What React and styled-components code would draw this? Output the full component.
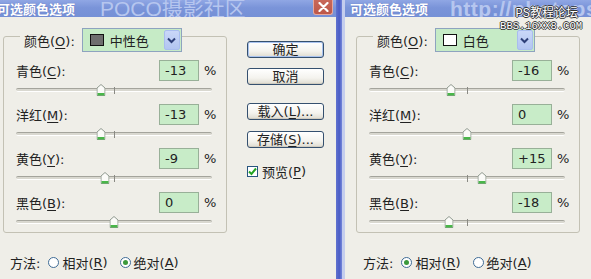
import React from "react";
import styled, { createGlobalStyle } from "styled-components";

const GlobalStyle = createGlobalStyle`
  html, body {
    margin: 0;
    padding: 0;
    background: #efeee8;
  }
  body {
    font-family: "DejaVu Sans", "Noto Sans CJK SC", sans-serif;
    font-size: 13px;
    color: #222;
  }
`;

const Screen = styled.div`
  position: relative;
  display: flex;
  width: 591px;
  height: 279px;
  overflow: hidden;
  background: #efeee8;
`;

const Win = styled.div`
  flex-shrink: 0;
  width: 344px;
  height: 279px;
  margin-left: ${(p) => (p.$first ? "-8px" : "0")};
  border-left: ${(p) => (p.$first ? "none" : "3px solid #c4cdee")};
  display: flex;
  flex-direction: column;
  background: #efeee8;
`;

const Frame = styled.div`
  flex-shrink: 0;
  width: 6px;
  height: 279px;
  background: linear-gradient(90deg, #6072cf 0%, #4b5dc6 55%, #7486d8 100%);
`;

const TitleBar = styled.div`
  display: flex;
  align-items: center;
  height: 17px;
  padding-left: 5px;
  white-space: nowrap;
  overflow: hidden;
  background: linear-gradient(180deg, #90a7e4 0%, #7a94d9 45%, #7590d6 100%);
`;

const Title = styled.span`
  font-family: "Noto Sans CJK SC", sans-serif;
  font-weight: 700;
  font-size: 13px;
  color: #fff;
  line-height: 17px;
  text-shadow: 0 0 1px #5a6fb8;
`;

const Mark = styled.span`
  margin-left: ${(p) => p.$gap}px;
  font-family: "Liberation Sans", "Noto Sans CJK SC", sans-serif;
  font-weight: ${(p) => (p.$bold ? 700 : 400)};
  font-size: 21px;
  line-height: 17px;
  color: #b6c6ef;
  letter-spacing: ${(p) => (p.$bold ? "0.5px" : "0")};
`;

const CloseBtn = styled.div`
  align-self: flex-start;
  margin-left: auto;
  margin-right: 3px;
  width: 20px;
  height: 15px;
  box-sizing: border-box;
  border: 1px solid #e6a79c;
  border-top: none;
  border-radius: 0 0 3px 3px;
  background: linear-gradient(180deg, #c8685a, #bd5749);
  display: flex;
  align-items: center;
  justify-content: center;
`;

const Body = styled.div`
  display: flex;
  padding-left: 11px;
`;

const LeftCol = styled.div`
  width: 224px;
  display: flex;
  flex-direction: column;
`;

const Group = styled.div`
  margin-top: 19px;
  height: 197px;
  box-sizing: border-box;
  border: 1px solid #c3c1b4;
  border-radius: 3px;
  display: flex;
  flex-direction: column;
`;

const Legend = styled.div`
  display: flex;
  align-items: center;
  align-self: flex-start;
  margin: -9px 0 0 16px;
  padding-left: 4px;
  background: #efeee8;
`;

const Label = styled.span`
  flex: 1;
  white-space: nowrap;
  u {
    text-decoration: underline;
    text-underline-offset: 2px;
  }
`;

const LegendLabel = styled(Label)`
  flex: none;
  margin-right: 7px;
`;

const Combo = styled.div`
  width: 100px;
  height: 24px;
  box-sizing: border-box;
  border: 1px solid #8ea3bf;
  background: #c6ebc6;
  display: flex;
  align-items: center;
  font-family: "Noto Sans CJK SC", sans-serif;
`;

const Swatch = styled.span`
  width: 14px;
  height: 12px;
  box-sizing: border-box;
  margin-left: 7px;
  border: 1px solid #111;
  background: ${(p) => p.$color};
`;

const ComboText = styled.span`
  margin-left: 6px;
`;

const ComboArrow = styled.span`
  margin-left: auto;
  margin-right: 1px;
  width: 16px;
  height: 20px;
  box-sizing: border-box;
  border: 1px solid #a9bdee;
  border-radius: 2px;
  background: linear-gradient(180deg, #c9d7f8, #b2c5f1);
  display: flex;
  align-items: center;
  justify-content: center;
`;

const Rows = styled.div`
  margin-top: 8px;
  display: flex;
  flex-direction: column;
`;

const Row = styled.div`
  display: flex;
  flex-direction: column;
  margin-bottom: 5px;
`;

const InputLine = styled.div`
  display: flex;
  align-items: center;
  height: 21px;
  padding: 0 10px 0 12px;
`;

const Field = styled.div`
  width: 40px;
  height: 21px;
  box-sizing: border-box;
  border: 1px solid #98b098;
  background: #c8ecc8;
  padding-left: 5px;
  display: flex;
  align-items: center;
`;

const Percent = styled.span`
  margin-left: 5px;
  width: 12px;
`;

const Slider = styled.div`
  position: relative;
  height: 18px;
  margin: 0 14px 0 12px;
`;

const Track = styled.div`
  position: absolute;
  left: 0;
  right: 0;
  top: 7px;
  height: 2px;
  border-top: 1px solid #a4a49c;
  border-bottom: 1px solid #ffffff;
  border-radius: 2px;
  background: #d9d8d0;
`;

const Tick = styled.div`
  position: absolute;
  left: 50%;
  top: 6px;
  width: 1px;
  height: 7px;
  background: #8a8a84;
`;

const Thumb = styled.div`
  position: absolute;
  top: 3px;
  width: 9px;
  height: 12px;
  transform: translateX(-50%);
  display: flex;
`;

const Method = styled.div`
  margin-top: 19px;
  height: 20px;
  display: flex;
  align-items: center;
  padding-left: 7px;
  white-space: nowrap;
  u {
    text-decoration: underline;
    text-underline-offset: 2px;
  }
`;

const Radio = styled.span`
  display: inline-flex;
  align-items: center;
  margin-left: ${(p) => p.$gap}px;
`;

const RadioDot = styled.span`
  width: 11px;
  height: 11px;
  box-sizing: border-box;
  border-radius: 50%;
  border: 1px solid #3f6c96;
  background: #fff;
  margin-right: 3px;
  display: flex;
  align-items: center;
  justify-content: center;
  &::after {
    content: "";
    width: 5px;
    height: 5px;
    border-radius: 50%;
    background: ${(p) => (p.$on ? "#3c9a3c" : "transparent")};
  }
`;

const ButtonCol = styled.div`
  margin-left: 20px;
  width: 77px;
  padding-top: 24px;
  display: flex;
  flex-direction: column;
`;

const Button = styled.div`
  margin-top: ${(p) => p.$gap}px;
  height: 17px;
  box-sizing: border-box;
  border: 1px solid #35506f;
  border-radius: 3px;
  background: linear-gradient(180deg, #ffffff 0%, #f4f3ee 60%, #dedbd0 100%);
  box-shadow: ${(p) => (p.$def ? "inset 0 0 0 1px #a9c3ef" : "inset 0 -1px 0 #d0ccc0")};
  display: flex;
  align-items: center;
  justify-content: center;
  font-size: 13px;
  line-height: 15px;
  u {
    text-decoration: underline;
    text-underline-offset: 2px;
  }
`;

const CheckLine = styled.div`
  margin-top: 17px;
  display: flex;
  align-items: center;
  height: 12px;
  u {
    text-decoration: underline;
    text-underline-offset: 2px;
  }
`;

const CheckBox = styled.span`
  width: 11px;
  height: 11px;
  box-sizing: border-box;
  border: 1px solid #27557f;
  background: #fff;
  margin-right: 4px;
  display: flex;
  align-items: center;
  justify-content: center;
`;

const Stamp = styled.div`
  position: absolute;
  top: 8px;
  right: 9px;
  display: flex;
  flex-direction: column;
  align-items: flex-end;
  color: #fff;
  text-shadow: 1px 0 #333, -1px 0 #333, 0 1px #333, 0 -1px #333;
`;

const StampTop = styled.span`
  font-family: "Liberation Mono", "Noto Sans CJK SC", monospace;
  font-size: 12px;
  line-height: 13px;
  margin-right: 4px;
`;

const StampBottom = styled.span`
  font-family: "Liberation Mono", monospace;
  font-size: 10.5px;
  line-height: 10px;
`;

const left = {
  title: "POCO摄影社区",
  gap: 25,
  bold: false,
  swatch: "#6e6e6e",
  colorName: "中性色",
  values: [-13, -13, -9, 0],
  method: "abs",
};

const right = {
  title: "http://photops.com",
  gap: 22,
  bold: true,
  swatch: "#ffffff",
  colorName: "白色",
  values: [-16, 0, 15, -18],
  method: "rel",
};

const channels = [
  ["青色", "C"],
  ["洋红", "M"],
  ["黄色", "Y"],
  ["黑色", "B"],
];

function fmt(v) {
  return v > 0 ? "+" + v : String(v);
}

function ThumbIcon() {
  return (
    <svg viewBox="0 0 9 12" width="9" height="12">
      <path d="M0.5 4 L4.5 0.5 L8.5 4 L8.5 11.5 L0.5 11.5 Z" fill="#fbfbf8" stroke="#8f9a8f" strokeWidth="1" />
      <rect x="1" y="9" width="7" height="2.5" fill="#49b649" />
    </svg>
  );
}

function Dialog({ d, first }) {
  return (
    <Win $first={first}>
      <TitleBar>
        <Title>可选颜色选项</Title>
        <Mark $gap={d.gap} $bold={d.bold}>{d.title}</Mark>
        <CloseBtn>
          <svg width="11" height="10" viewBox="0 0 11 10">
            <path d="M1.5 1 L9.5 9 M9.5 1 L1.5 9" stroke="#fff" strokeWidth="2.2" strokeLinecap="round" />
          </svg>
        </CloseBtn>
      </TitleBar>
      <Body>
        <LeftCol>
          <Group>
            <Legend>
              <LegendLabel>颜色(<u>O</u>):</LegendLabel>
              <Combo>
                <Swatch $color={d.swatch} />
                <ComboText>{d.colorName}</ComboText>
                <ComboArrow>
                  <svg width="9" height="7" viewBox="0 0 9 7">
                    <path d="M1 1.5 L4.5 5 L8 1.5" fill="none" stroke="#2d3f78" strokeWidth="2" />
                  </svg>
                </ComboArrow>
              </Combo>
            </Legend>
            <Rows>
              {channels.map(([name, key], i) => {
                const v = d.values[i];
                return (
                  <Row key={key}>
                    <InputLine>
                      <Label>
                        {name}(<u>{key}</u>):
                      </Label>
                      <Field>{fmt(v)}</Field>
                      <Percent>%</Percent>
                    </InputLine>
                    <Slider>
                      <Track />
                      <Tick />
                      <Thumb style={{ left: `calc(50% + ${v / 2}%)` }}>
                        <ThumbIcon />
                      </Thumb>
                    </Slider>
                  </Row>
                );
              })}
            </Rows>
          </Group>
          <Method>
            方法:
            <Radio $gap={8}>
              <RadioDot $on={d.method === "rel"} />
              相对(<u>R</u>)
            </Radio>
            <Radio $gap={12}>
              <RadioDot $on={d.method === "abs"} />
              绝对(<u>A</u>)
            </Radio>
          </Method>
        </LeftCol>
        <ButtonCol>
          <Button $gap={0} $def>确定</Button>
          <Button $gap={10}>取消</Button>
          <Button $gap={18}>
            载入(<u>L</u>)...
          </Button>
          <Button $gap={11}>
            存储(<u>S</u>)...
          </Button>
          <CheckLine>
            <CheckBox>
              <svg width="9" height="9" viewBox="0 0 9 9">
                <path d="M1 4.5 L3.5 7 L8 1.5" fill="none" stroke="#22a322" strokeWidth="2" />
              </svg>
            </CheckBox>
            预览(<u>P</u>)
          </CheckLine>
        </ButtonCol>
      </Body>
    </Win>
  );
}

export default function App() {
  return (
    <>
      <GlobalStyle />
      <Screen>
        <Dialog d={left} first />
        <Frame />
        <Dialog d={right} />
        <Stamp>
          <StampTop>PS教程论坛</StampTop>
          <StampBottom>BBS.16XX8.COM</StampBottom>
        </Stamp>
      </Screen>
    </>
  );
}
